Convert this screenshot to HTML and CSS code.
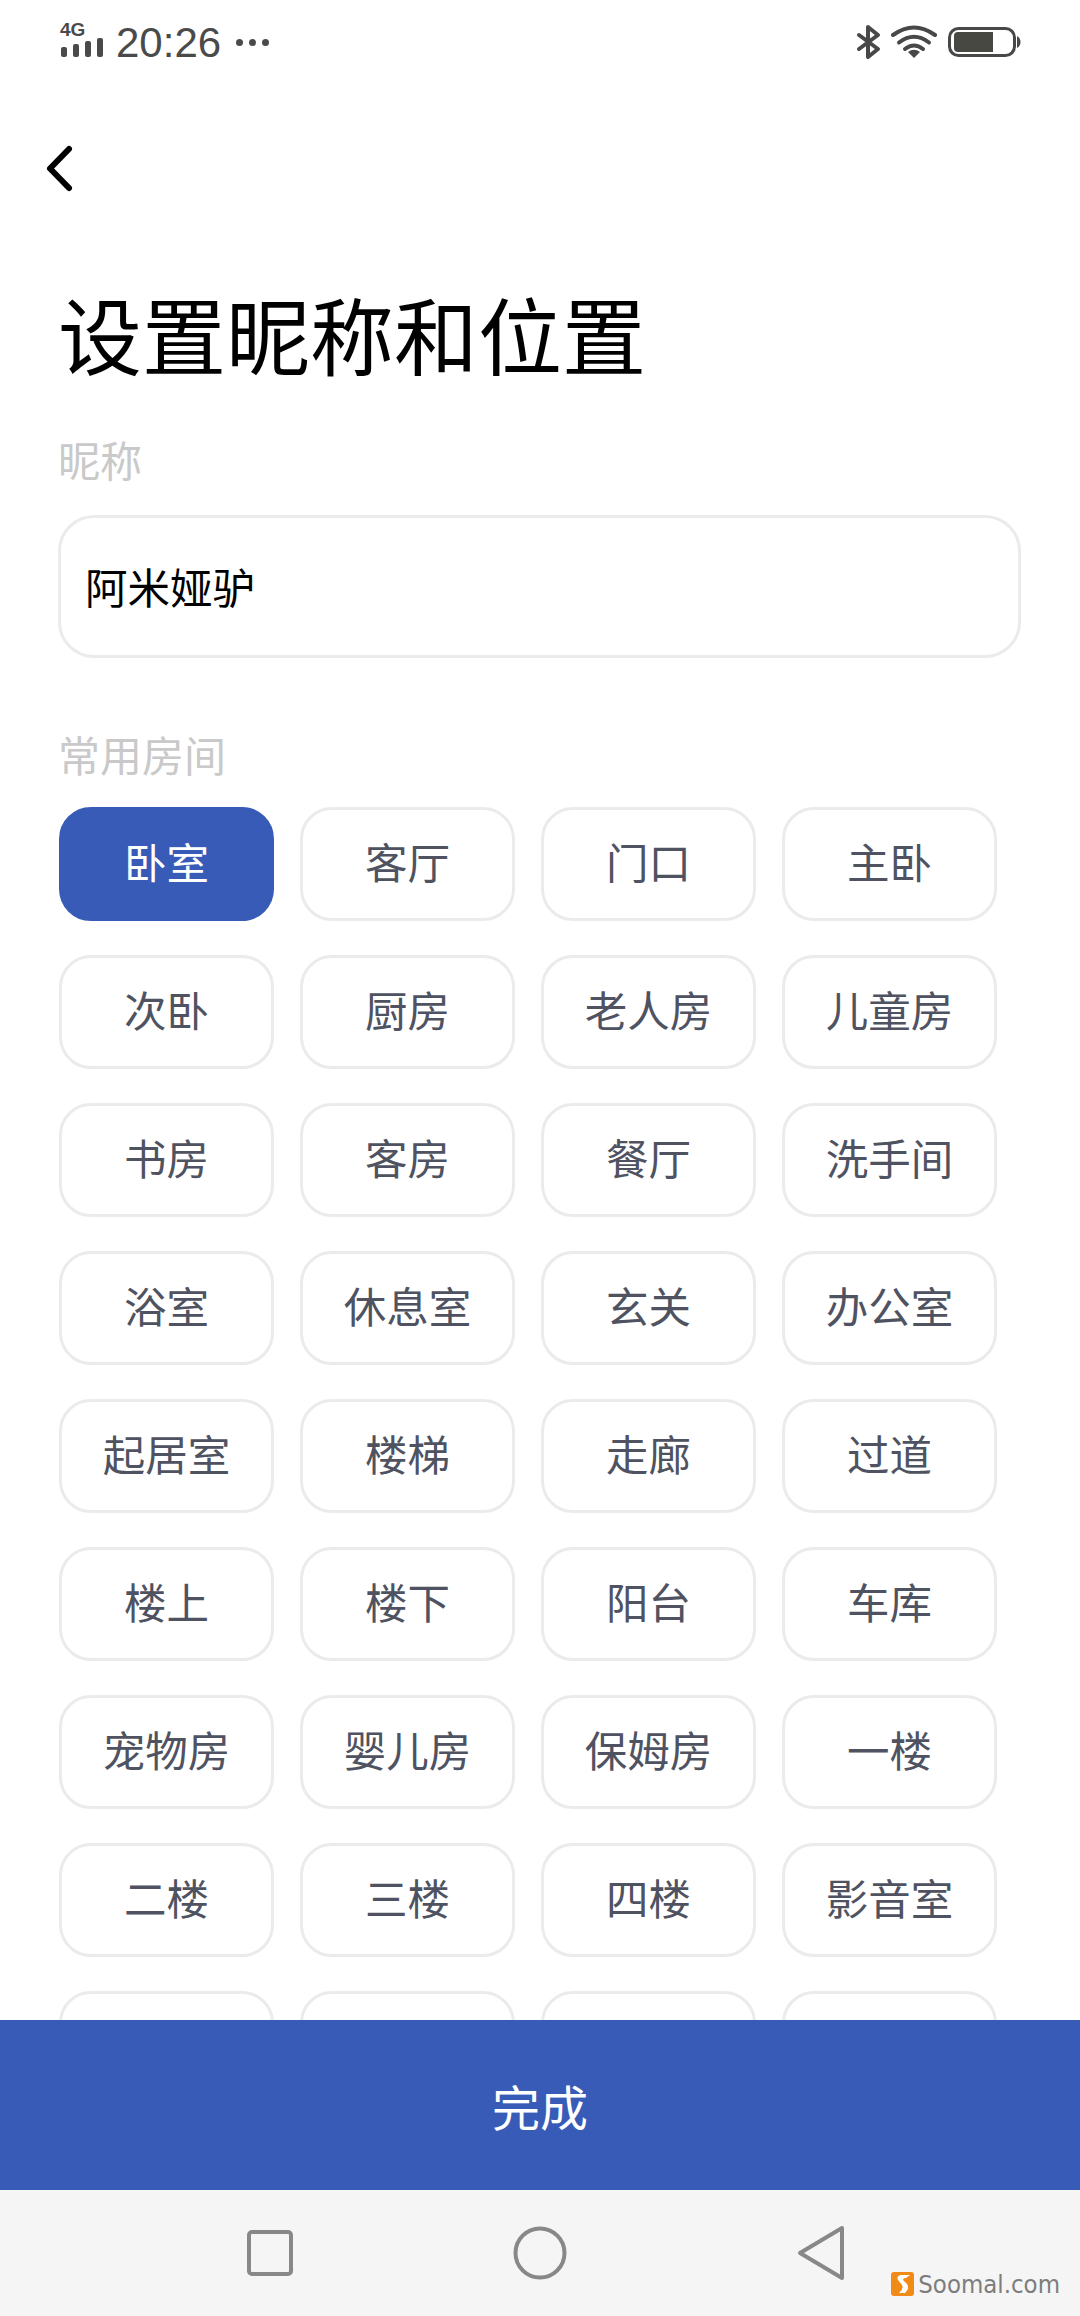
FILE: index.html
```html
<!DOCTYPE html>
<html lang="zh-CN">
<head>
  <meta charset="UTF-8" />
  <meta name="viewport" content="width=device-width, initial-scale=1.0"/>
  <title>设置昵称和位置</title>
  <link rel="stylesheet" href="styles.css">
</head>
<body>
  <div class="page">

    <!-- status bar -->
    <div class="status">
      <div class="status-left">
        <div class="signal">
          <span class="signal-label">4G</span>
          <div class="signal-bars">
            <i class="bar bar1"></i><i class="bar bar2"></i><i class="bar bar3"></i><i class="bar bar4"></i>
          </div>
        </div>
        <span class="time">20:26</span>
        <div class="dots"><i></i><i></i><i></i></div>
      </div>
      <div class="status-right">
        <svg class="ic-bt" width="25" height="36" viewBox="0 0 25 36"><path d="M3 11 L22 25 L12 33 V3 L22 11 L3 25" fill="none" stroke="#484848" stroke-width="4" stroke-linecap="round" stroke-linejoin="round"/></svg>
        <svg class="ic-wifi" width="46" height="34" viewBox="0 0 46 34">
          <path d="M2 10 Q23 -5 44 10" fill="none" stroke="#484848" stroke-width="4" stroke-linecap="round"/>
          <path d="M8 17.5 Q23 6 38 17.5" fill="none" stroke="#484848" stroke-width="4" stroke-linecap="round"/>
          <path d="M14 24 Q23 17 32 24" fill="none" stroke="#484848" stroke-width="4" stroke-linecap="round"/>
          <path d="M17 27 Q23 22.500 29 27 L23 33 Z" fill="#484848"/>
        </svg>
        <svg class="ic-batt" width="73" height="30" viewBox="0 0 73 30">
          <rect x="1.500" y="1.500" width="65" height="27" rx="9" fill="none" stroke="#484848" stroke-width="3"/>
          <path d="M6 9 Q6 5 10 5 H45 V25 H10 Q6 25 6 21 Z" fill="#484843"/>
          <path d="M69 9 Q72.500 11 72.500 15 Q72.500 19 69 21 Z" fill="#484848"/>
        </svg>
      </div>
    </div>

    <div class="content">
      <svg class="back" width="34" height="52" viewBox="0 0 34 52"><path d="M25 6 L6 25.500 L25 45" fill="none" stroke="#000" stroke-width="6" stroke-linecap="round" stroke-linejoin="round"/></svg>

      <h1 class="title">设置昵称和位置</h1>

      <div class="label label-name">昵称</div>
      <input class="name-input" type="text" value="阿米娅驴">

      <div class="label label-room">常用房间</div>
      <div class="rooms">
        <button class="room active">卧室</button>
        <button class="room">客厅</button>
        <button class="room">门口</button>
        <button class="room">主卧</button>
        <button class="room">次卧</button>
        <button class="room">厨房</button>
        <button class="room">老人房</button>
        <button class="room">儿童房</button>
        <button class="room">书房</button>
        <button class="room">客房</button>
        <button class="room">餐厅</button>
        <button class="room">洗手间</button>
        <button class="room">浴室</button>
        <button class="room">休息室</button>
        <button class="room">玄关</button>
        <button class="room">办公室</button>
        <button class="room">起居室</button>
        <button class="room">楼梯</button>
        <button class="room">走廊</button>
        <button class="room">过道</button>
        <button class="room">楼上</button>
        <button class="room">楼下</button>
        <button class="room">阳台</button>
        <button class="room">车库</button>
        <button class="room">宠物房</button>
        <button class="room">婴儿房</button>
        <button class="room">保姆房</button>
        <button class="room">一楼</button>
        <button class="room">二楼</button>
        <button class="room">三楼</button>
        <button class="room">四楼</button>
        <button class="room">影音室</button>
        <button class="room"></button>
        <button class="room"></button>
        <button class="room"></button>
        <button class="room"></button>
      </div>
    </div>

    <button class="done">完成</button>

    <!-- android nav bar -->
    <div class="nav">
      <svg width="48" height="50" viewBox="0 0 48 50"><rect x="3" y="4" width="42" height="42" rx="3" fill="none" stroke="#888" stroke-width="4"/></svg>
      <svg class="nav-circle" width="54" height="54" viewBox="0 0 54 54"><circle cx="27" cy="27" r="24.500" fill="none" stroke="#888" stroke-width="4"/></svg>
      <svg class="nav-back" width="48" height="56" viewBox="0 0 48 56"><path d="M45 3 V53 L3 28 Z" fill="none" stroke="#888" stroke-width="4" stroke-linejoin="round"/></svg>
      <div class="watermark">
        <svg width="23" height="24" viewBox="0 0 23 24">
          <rect width="23" height="24" rx="3" fill="#f28a17"/>
          <path d="M19 3 H10 Q5 4 7 8 L11 13 Q13 17 8 21 H14 Q19 17 16 12 L12 8 Q12 6 15 6 Z" fill="#fff"/>
        </svg>
        <span>Soomal.com</span>
      </div>
    </div>

  </div>
</body>
</html>
```

FILE: styles.css
```css
* {
  box-sizing: border-box;
}
body {
  margin: 0;
  background: #fff;
  font-family: "Noto Sans CJK SC", "Noto Sans", sans-serif;
}
.page {
  width: 1080px;
  height: 2316px;
  display: flex;
  flex-direction: column;
  overflow: hidden;
}

/* status bar */
.status {
  height: 100px;
  flex: none;
  display: flex;
  justify-content: space-between;
  align-items: flex-start;
  padding: 23px 60px 0 60px;
  color: #4a4a4a;
}
.status-left {
  display: flex;
  align-items: flex-start;
}
.signal {
  width: 44px;
  height: 36px;
  display: flex;
  flex-direction: column;
}
.signal-label {
  font: bold 19px/14px "Liberation Sans", sans-serif;
  height: 14px;
}
.signal-bars {
  display: flex;
  align-items: flex-end;
  gap: 6px;
  margin-left: 1px;
  height: 20px;
}
.bar {
  display: block;
  width: 6px;
  background: #4a4a4a;
  border-radius: 2px;
}
.bar1 { height: 10px; }
.bar2 { height: 13px; }
.bar3 { height: 16px; }
.bar4 { height: 19px; }
.time {
  font: 42px/44px "Liberation Sans", sans-serif;
  margin-left: 12px;
  margin-top: -2px;
}
.dots {
  display: flex;
  gap: 6px;
  margin-left: 15px;
  margin-top: 16px;
}
.dots i {
  width: 7px;
  height: 7px;
  border-radius: 50%;
  background: #4a4a4a;
}
.status-right {
  display: flex;
  align-items: flex-start;
}
.ic-bt {
  margin-top: 1px;
}
.ic-wifi {
  margin-left: 10px;
  margin-top: 2px;
}
.ic-batt {
  margin-left: 11px;
  margin-top: 4px;
  margin-right: -1px;
}

/* main form */
.content {
  flex: 1;
  min-height: 0;
  overflow: hidden;
  padding: 43px 0 0 58px;
}
.back {
  display: block;
  margin-left: -14px;
}
.title {
  margin: 88px 0 0 0;
  font-size: 84px;
  line-height: 100px;
  font-weight: 400;
  color: #000;
}
.label {
  font-size: 42px;
  line-height: 60px;
  color: #c9c9c9;
}
.label-name {
  margin-top: 46px;
}
.label-room {
  margin-top: 66px;
}
.name-input {
  display: block;
  width: 963px;
  height: 143px;
  margin-top: 26px;
  padding: 0 24px 2px 24px;
  border: 3px solid #ebebeb;
  border-radius: 36px;
  font-family: inherit;
  font-size: 42.500px;
  color: #000;
  background: #fff;
  outline: none;
}
.rooms {
  display: grid;
  grid-template-columns: repeat(4, 215px);
  grid-auto-rows: 114px;
  column-gap: 26px;
  row-gap: 34px;
  margin: 23px 0 0 1px;
}
.room {
  padding: 0 0 7px 0;
  border: 3px solid #ebebeb;
  border-radius: 32px;
  background: #fff;
  font-family: inherit;
  font-size: 42.500px;
  color: #4f5361;
}
.room.active {
  background: #375bb7;
  border-color: #375bb7;
  color: #fff;
}

/* bottom */
.done {
  flex: none;
  height: 170px;
  padding: 0;
  border: none;
  background: #375bb7;
  color: #fff;
  font-family: inherit;
  font-size: 48px;
}
.nav {
  flex: none;
  height: 126px;
  position: relative;
  display: flex;
  align-items: center;
  padding-left: 246px;
  background: #f5f5f5;
}
.nav-circle {
  margin-left: 219px;
}
.nav-back {
  margin-left: 230px;
}
.watermark {
  position: absolute;
  right: 20px;
  bottom: 19px;
  display: flex;
  align-items: center;
  gap: 4px;
  font: 25.5px/26px "DejaVu Sans Condensed", "DejaVu Sans", sans-serif;
  color: #7d7d7d;
}
```
